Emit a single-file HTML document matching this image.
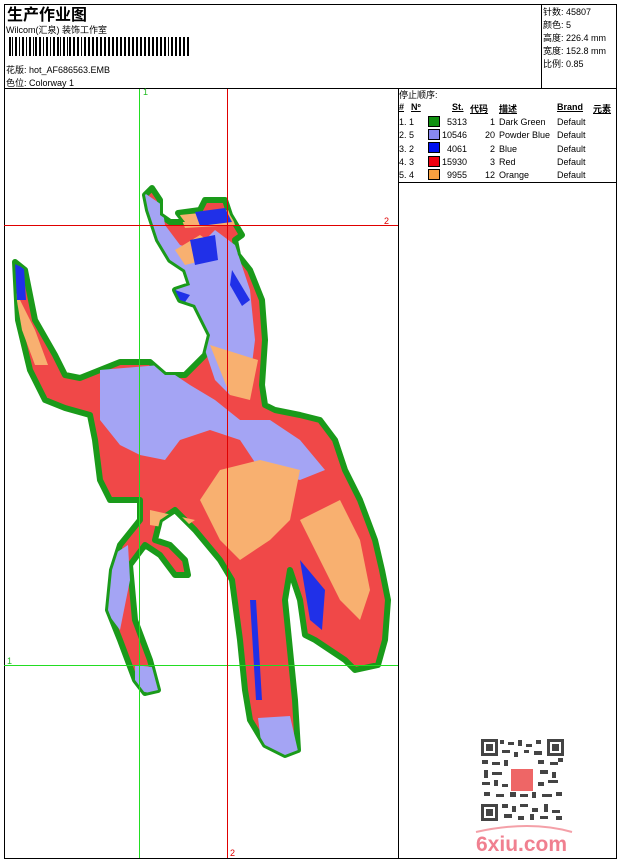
<!DOCTYPE html>
<html><head><meta charset="utf-8"><style>
body{margin:0;width:620px;height:860px;background:#fff;position:relative;overflow:hidden;font-family:"Liberation Sans","Noto Sans CJK SC",sans-serif;color:#000}
.a{position:absolute;white-space:nowrap}
.s{font-size:9px}
.sw{position:absolute;width:10px;height:9px;border:1px solid #000}
</style></head><body>
<svg class="a" style="left:0;top:0" width="620" height="860">
<defs>
<clipPath id="hc"><path id="hp" d="M15,262 L25,270 L35,320 L55,355 L65,375 L80,378 L100,370 L120,362 L150,362 L165,375 L185,375 L205,355 L210,335 L195,305 L180,300 L175,290 L190,285 L185,270 L170,260 L158,240 L148,210 L145,195 L152,188 L160,200 L160,215 L170,222 L185,222 L178,213 L200,210 L205,200 L225,200 L230,215 L242,235 L235,240 L238,255 L250,270 L262,300 L265,340 L262,385 L265,405 L275,410 L300,415 L320,420 L335,440 L345,470 L360,500 L375,540 L382,570 L388,600 L385,640 L378,665 L355,670 L345,660 L315,640 L305,635 L300,600 L290,570 L285,600 L290,650 L295,700 L298,750 L285,755 L265,745 L250,720 L245,690 L240,640 L232,580 L220,560 L195,530 L175,510 L160,520 L155,540 L170,545 L185,560 L188,575 L175,575 L160,555 L145,545 L130,565 L135,620 L150,660 L158,690 L145,693 L135,680 L120,640 L108,610 L112,570 L120,545 L140,520 L140,500 L110,500 L100,480 L95,440 L90,415 L65,408 L45,400 L30,370 L18,320 Z"/></clipPath>
</defs>
<rect x="4.5" y="4.5" width="612" height="854" fill="none" stroke="#000"/>
<line x1="4" y1="88.5" x2="617" y2="88.5" stroke="#000"/>
<line x1="541.5" y1="4" x2="541.5" y2="88" stroke="#000"/>
<line x1="398.5" y1="88" x2="398.5" y2="859" stroke="#000"/>
<line x1="398" y1="182.5" x2="617" y2="182.5" stroke="#000"/>
<g fill="#000">
<rect x="9" y="37" width="2" height="19"/><rect x="12" y="37" width="1" height="19"/><rect x="15" y="37" width="2" height="19"/><rect x="19" y="37" width="1" height="19"/><rect x="22" y="37" width="2" height="19"/><rect x="26" y="37" width="1" height="19"/><rect x="29" y="37" width="2" height="19"/><rect x="33" y="37" width="1" height="19"/><rect x="35" y="37" width="2" height="19"/><rect x="39" y="37" width="2" height="19"/><rect x="43" y="37" width="1" height="19"/><rect x="46" y="37" width="2" height="19"/><rect x="50" y="37" width="1" height="19"/><rect x="53" y="37" width="2" height="19"/><rect x="57" y="37" width="2" height="19"/><rect x="60" y="37" width="1" height="19"/><rect x="63" y="37" width="2" height="19"/><rect x="67" y="37" width="1" height="19"/><rect x="69" y="37" width="2" height="19"/><rect x="73" y="37" width="2" height="19"/><rect x="77" y="37" width="2" height="19"/><rect x="81" y="37" width="1" height="19"/><rect x="84" y="37" width="2" height="19"/><rect x="88" y="37" width="2" height="19"/><rect x="92" y="37" width="2" height="19"/><rect x="96" y="37" width="2" height="19"/><rect x="100" y="37" width="2" height="19"/><rect x="104" y="37" width="2" height="19"/><rect x="108" y="37" width="2" height="19"/><rect x="112" y="37" width="2" height="19"/><rect x="116" y="37" width="2" height="19"/><rect x="120" y="37" width="2" height="19"/><rect x="124" y="37" width="2" height="19"/><rect x="128" y="37" width="2" height="19"/><rect x="132" y="37" width="2" height="19"/><rect x="136" y="37" width="2" height="19"/><rect x="140" y="37" width="2" height="19"/><rect x="144" y="37" width="2" height="19"/><rect x="148" y="37" width="2" height="19"/><rect x="152" y="37" width="2" height="19"/><rect x="156" y="37" width="2" height="19"/><rect x="160" y="37" width="2" height="19"/><rect x="164" y="37" width="2" height="19"/><rect x="168" y="37" width="1" height="19"/><rect x="171" y="37" width="2" height="19"/><rect x="175" y="37" width="2" height="19"/><rect x="179" y="37" width="2" height="19"/><rect x="183" y="37" width="2" height="19"/><rect x="187" y="37" width="2" height="19"/>
</g>
<use href="#hp" fill="#f04848" stroke="#1a9a1a" stroke-width="6" stroke-linejoin="round"/>
<g clip-path="url(#hc)">
<g fill="#a4a4f4">
<path d="M140,190 L162,205 L165,225 L180,245 L195,250 L215,230 L235,245 L250,290 L255,340 L250,380 L230,395 L215,380 L205,350 L195,310 L178,295 L165,260 L140,230 Z"/>
<path d="M100,370 L160,365 L190,385 L215,400 L240,420 L270,420 L300,440 L325,470 L300,480 L260,470 L240,440 L210,430 L180,440 L165,460 L140,455 L120,445 L100,420 Z"/>
<path d="M105,560 L128,545 L130,580 L120,630 L105,610 Z"/>
<path d="M135,665 L160,668 L160,695 L135,690 Z"/>
<path d="M258,718 L290,716 L300,760 L262,750 Z"/>
<path d="M255,480 L290,470 L285,500 L260,500 Z"/>
</g>
<g fill="#f8b070">
<path d="M175,250 L200,235 L215,245 L205,260 L185,265 Z"/>
<path d="M15,290 L35,330 L48,365 L35,365 L22,330 Z"/>
<path d="M210,345 L258,360 L250,400 L230,395 Z"/>
<path d="M220,470 L260,460 L300,470 L290,520 L270,540 L240,560 L220,540 L200,500 Z"/>
<path d="M300,520 L340,500 L360,540 L370,590 L360,620 L340,600 L320,560 Z"/>
<path d="M150,510 L195,520 L180,530 L150,525 Z"/>
<path d="M180,215 L230,210 L235,225 L185,228 Z"/>
</g>
<g fill="#2030e8">
<path d="M195,212 L225,208 L232,222 L200,226 Z"/>
<path d="M190,240 L215,235 L218,260 L195,265 Z"/>
<path d="M232,270 L250,300 L242,306 L230,285 Z"/>
<path d="M250,600 L256,600 L262,700 L256,700 Z"/>
<path d="M300,560 L325,590 L322,630 L310,620 Z"/>
<path d="M175,290 L190,295 L185,302 L172,298 Z"/>
<path d="M10,262 L24,268 L26,300 L16,300 Z"/>
</g>
</g>
<line x1="139.5" y1="89" x2="139.5" y2="858" stroke="#22dd22"/>
<line x1="4" y1="665.5" x2="398" y2="665.5" stroke="#22dd22"/>
<line x1="227.5" y1="89" x2="227.5" y2="858" stroke="#e00000"/>
<line x1="4" y1="225.5" x2="398" y2="225.5" stroke="#e00000"/>
<text x="143" y="95" font-size="9" fill="#22bb22" font-family="Liberation Sans">1</text>
<text x="7" y="664" font-size="9" fill="#22bb22" font-family="Liberation Sans">1</text>
<text x="384" y="224" font-size="9" fill="#e00000" font-family="Liberation Sans">2</text>
<text x="230" y="856" font-size="9" fill="#e00000" font-family="Liberation Sans">2</text>
<g fill="#444">
<rect x="500" y="740" width="4" height="4"/><rect x="508" y="742" width="6" height="3"/><rect x="518" y="740" width="4" height="6"/><rect x="526" y="744" width="6" height="3"/><rect x="536" y="740" width="5" height="4"/>
<rect x="502" y="750" width="8" height="3"/><rect x="514" y="752" width="4" height="5"/><rect x="524" y="750" width="5" height="3"/><rect x="534" y="751" width="8" height="4"/>
<rect x="482" y="760" width="6" height="4"/><rect x="492" y="762" width="8" height="3"/><rect x="504" y="760" width="4" height="6"/><rect x="538" y="760" width="6" height="4"/><rect x="550" y="762" width="8" height="3"/><rect x="558" y="758" width="5" height="4"/>
<rect x="484" y="770" width="4" height="8"/><rect x="492" y="772" width="10" height="3"/><rect x="540" y="770" width="8" height="4"/><rect x="552" y="772" width="4" height="6"/>
<rect x="482" y="782" width="8" height="3"/><rect x="494" y="780" width="4" height="6"/><rect x="502" y="784" width="6" height="3"/><rect x="538" y="782" width="6" height="4"/><rect x="548" y="780" width="10" height="3"/>
<rect x="484" y="792" width="6" height="4"/><rect x="496" y="794" width="8" height="3"/><rect x="510" y="792" width="6" height="5"/><rect x="520" y="794" width="8" height="3"/><rect x="532" y="792" width="4" height="6"/><rect x="542" y="794" width="10" height="3"/><rect x="556" y="792" width="6" height="4"/>
<rect x="502" y="804" width="6" height="4"/><rect x="512" y="806" width="4" height="6"/><rect x="520" y="804" width="8" height="3"/><rect x="532" y="808" width="6" height="4"/><rect x="544" y="804" width="4" height="8"/><rect x="552" y="810" width="8" height="3"/>
<rect x="504" y="814" width="8" height="4"/><rect x="518" y="816" width="6" height="4"/><rect x="530" y="814" width="4" height="6"/><rect x="540" y="816" width="8" height="3"/><rect x="556" y="816" width="6" height="4"/>
<rect x="481" y="739" width="17" height="17"/><rect x="484" y="742" width="11" height="11" fill="#fff"/><rect x="486" y="744" width="7" height="7"/>
<rect x="547" y="739" width="17" height="17"/><rect x="550" y="742" width="11" height="11" fill="#fff"/><rect x="552" y="744" width="7" height="7"/>
<rect x="481" y="804" width="17" height="17"/><rect x="484" y="807" width="11" height="11" fill="#fff"/><rect x="486" y="809" width="7" height="7"/>
</g>
<rect x="511" y="769" width="22" height="22" fill="#ee6666"/>
<text x="476" y="851" font-size="21" font-weight="bold" fill="#f08090" font-family="Liberation Sans">6xiu.com</text>
<path d="M476,832 Q530,820 572,832" stroke="#f4a0a8" stroke-width="2" fill="none"/>
</svg>
<div class="a" style="left:7px;top:1px;font-size:16px;font-weight:bold">生产作业图</div>
<div class="a s" style="left:6px;top:23px">Wilcom(汇泉) 装饰工作室</div>
<div class="a s" style="left:6px;top:63px">花版: hot_AF686563.EMB</div>
<div class="a s" style="left:6px;top:76px">色位: Colorway 1</div>
<div class="a s" style="left:543px;top:6px;line-height:13px">针数: 45807<br>颜色: 5<br>高度: 226.4 mm<br>宽度: 152.8 mm<br>比例: 0.85</div>
<div class="a s" style="left:399px;top:88px">停止顺序:</div>
<div class="a s" style="left:399px;top:102px;font-weight:bold;text-decoration:underline">#</div>
<div class="a s" style="left:411px;top:102px;font-weight:bold;text-decoration:underline">Nº</div>
<div class="a s" style="left:452px;top:102px;font-weight:bold;text-decoration:underline">St.</div>
<div class="a s" style="left:470px;top:102px;font-weight:bold;text-decoration:underline">代码</div>
<div class="a s" style="left:499px;top:102px;font-weight:bold;text-decoration:underline">描述</div>
<div class="a s" style="left:557px;top:102px;font-weight:bold;text-decoration:underline">Brand</div>
<div class="a s" style="left:593px;top:102px;font-weight:bold;text-decoration:underline">元素</div>
<div class="a s" style="left:399px;top:116px;line-height:13.3px">1. 1<br>2. 5<br>3. 2<br>4. 3<br>5. 4</div>
<div class="sw" style="left:428px;top:116px;background:#109010"></div>
<div class="sw" style="left:428px;top:129px;background:#8888f0"></div>
<div class="sw" style="left:428px;top:142px;background:#0010f0"></div>
<div class="sw" style="left:428px;top:156px;background:#f00010"></div>
<div class="sw" style="left:428px;top:169px;background:#f8a040"></div>
<div class="a s" style="left:440px;width:27px;text-align:right;top:116px;line-height:13.3px">5313<br>10546<br>4061<br>15930<br>9955</div>
<div class="a s" style="left:478px;width:17px;text-align:right;top:116px;line-height:13.3px">1<br>20<br>2<br>3<br>12</div>
<div class="a s" style="left:499px;top:116px;line-height:13.3px">Dark Green<br>Powder Blue<br>Blue<br>Red<br>Orange</div>
<div class="a s" style="left:557px;top:116px;line-height:13.3px">Default<br>Default<br>Default<br>Default<br>Default</div>
</body></html>
